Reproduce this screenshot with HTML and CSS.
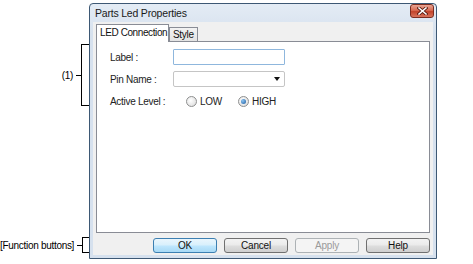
FILE: index.html
```html
<!DOCTYPE html>
<html lang="en">
<head>
  <meta charset="UTF-8" />
  <meta name="viewport" content="width=device-width, initial-scale=1.0"/>
  <title>Parts Led Properties</title>
  <link rel="stylesheet" href="styles.css">
</head>
<body>

  <div class="page">
    <!-- Llamadas de la izquierda -->
    <div class="callouts">
      <div class="callout callout-area">
        <span class="callout-text">(1)</span>
        <span class="tick"></span>
        <span class="bracket"></span>
      </div>
      <div class="callout callout-buttons">
        <span class="callout-text">[Function buttons]</span>
        <span class="tick"></span>
        <span class="bracket"></span>
      </div>
    </div>

    <!-- Ventana de dialogo -->
    <div class="window">
      <div class="titlebar">
        <span class="title">Parts Led Properties</span>
        <button class="close" aria-label="Close">
          <svg width="11" height="8" viewBox="0 0 11 8">
            <path d="M2 1 L9 7 M9 1 L2 7" stroke="#5a1a10" stroke-width="3.2" stroke-linecap="square"/>
            <path d="M2 1 L9 7 M9 1 L2 7" stroke="#ffffff" stroke-width="1.6" stroke-linecap="square"/>
          </svg>
        </button>
      </div>

      <div class="client">
        <div class="tabs">
          <ul class="tab-list" role="tablist">
            <li class="tab" role="tab" aria-selected="true">LED Connection</li>
            <li class="tab" role="tab" aria-selected="false">Style</li>
          </ul>

          <div class="tab-panel" role="tabpanel">
            <div class="form">
              <label class="field-label" for="led-label">Label :</label>
              <input class="text-input" id="led-label" type="text">

              <span class="field-label">Pin Name :</span>
              <div class="select"><span class="select-arrow"></span></div>

              <span class="field-label">Active Level :</span>
              <div class="radios">
                <span class="radio-item radio-low"><span class="radio"></span>LOW</span>
                <span class="radio-item"><span class="radio is-checked"></span>HIGH</span>
              </div>
            </div>
          </div>
        </div>

        <div class="buttons">
          <button class="btn btn-default">OK</button>
          <button class="btn">Cancel</button>
          <button class="btn" disabled>Apply</button>
          <button class="btn">Help</button>
        </div>
      </div>
    </div>
  </div>

</body>
</html>
```

FILE: styles.css
```css
/* General */
body {
  margin: 0;
  background: #fff;
  font-family: "Liberation Sans", Arial, sans-serif;
  font-size: 10px;
  letter-spacing: -0.3px;
  color: #1c1c1c;
}

.page {
  display: flex;
  align-items: flex-start;
}

/* Llamadas */
.callouts {
  width: 89px;
  display: flex;
  flex-direction: column;
  padding-top: 44px;
}

.callout {
  display: flex;
  align-items: center;
  justify-content: flex-end;
  color: #000;
}
.callout-area {
  height: 62px;
}
.callout-buttons {
  height: 16px;
  margin-top: 131px;
}

.callout-text {
  margin-right: 3px;
  white-space: nowrap;
}
.tick {
  width: 5px;
  height: 1px;
  background: #000;
}
.bracket {
  width: 8px;
  height: 100%;
  box-sizing: border-box;
  border: 1px solid #000;
  border-right: none;
}

/* Ventana */
.window {
  width: 348px;
  height: 256px;
  margin-top: 3px;
  box-sizing: border-box;
  border: 1px solid #3d5874;
  border-radius: 4px 4px 0 0;
  background: linear-gradient(#e4ecf5, #d6e1ee 30px);
  padding: 0 3px 3px;
  display: flex;
  flex-direction: column;
}

.titlebar {
  height: 18px;
  display: flex;
  align-items: flex-start;
  justify-content: space-between;
}
.title {
  margin: 3px 0 0 2px;
  font-size: 10.5px;
  letter-spacing: -0.2px;
  color: #1a1a1a;
}
.close {
  width: 24px;
  height: 14px;
  margin-right: -1px;
  padding: 0;
  border: 1px solid #7a2c20;
  border-radius: 3px;
  background: linear-gradient(#eaa593, #d86a52 45%, #c2432a 55%, #d8735c);
  display: flex;
  align-items: center;
  justify-content: center;
}

.client {
  flex: 1;
  background: #f0f0f0;
  padding: 2px 3px 2px;
  display: flex;
  flex-direction: column;
}

/* Pestanas */
.tabs {
  flex: 1;
  display: flex;
  flex-direction: column;
}

.tab-list {
  display: flex;
  align-items: flex-end;
  height: 17px;
  margin: 0;
  padding: 0;
  list-style: none;
}

.tab {
  box-sizing: border-box;
  height: 14px;
  padding: 0 3px;
  border: 1px solid #898c95;
  border-bottom: none;
  background: linear-gradient(#f2f2f2, #e3e3e3);
  line-height: 14px;
  color: #111;
  white-space: nowrap;
}
.tab[aria-selected="true"] {
  position: relative;
  z-index: 1;
  width: 73px;
  height: 18px;
  margin-bottom: -1px;
  padding: 0 3px;
  background: #fff;
  line-height: 15px;
  letter-spacing: -0.4px;
}

.tab-panel {
  flex: 1;
  background: #fff;
  border: 1px solid #898c95;
  padding: 7px 0 0 13px;
}

/* Formulario */
.form {
  display: grid;
  grid-template-columns: 63px 112px;
  grid-auto-rows: 16px;
  row-gap: 6px;
  align-items: center;
}

.field-label {
  color: #222;
  white-space: nowrap;
}

.text-input {
  box-sizing: border-box;
  width: 112px;
  height: 16px;
  margin: 0;
  border: 1px solid #8fb7dd;
  border-radius: 1px;
  background: #fff;
}

.select {
  box-sizing: border-box;
  height: 16px;
  border: 1px solid #c5c5c5;
  border-radius: 2px;
  background: #fff;
  display: flex;
  align-items: center;
  justify-content: flex-end;
  padding-right: 4px;
}
.select-arrow {
  width: 0;
  height: 0;
  border-left: 3px solid transparent;
  border-right: 3px solid transparent;
  border-top: 4px solid #111;
}

.radios {
  display: flex;
  align-items: center;
  padding-left: 13px;
}
.radio-item {
  display: flex;
  align-items: center;
  gap: 3px;
  color: #222;
}
.radio-low {
  width: 52px;
}

.radio {
  box-sizing: border-box;
  width: 11px;
  height: 11px;
  border: 1px solid #8e8f8f;
  border-radius: 50%;
  background: radial-gradient(circle at 40% 40%, #ffffff, #d8d8d8);
  display: flex;
  align-items: center;
  justify-content: center;
}
.radio.is-checked::after {
  content: "";
  width: 5px;
  height: 5px;
  border-radius: 50%;
  background: radial-gradient(circle at 35% 35%, #8cc4f2, #1a5aa0);
}

/* Botones */
.buttons {
  display: flex;
  justify-content: flex-end;
  gap: 7px;
  margin-top: 5px;
}

.btn {
  box-sizing: border-box;
  width: 64px;
  height: 15px;
  padding: 0;
  border: 1px solid #707070;
  border-radius: 3px;
  background: linear-gradient(#f3f3f3, #ebebeb 45%, #dddddd 55%, #cfcfcf);
  font-family: inherit;
  font-size: 10px;
  letter-spacing: -0.2px;
  line-height: 13px;
  color: #111;
}
.btn-default {
  border-color: #3c7fb1;
  background: linear-gradient(#eaf6fd, #d9f0fc 45%, #bee6fd 55%, #a7d9f5);
}
.btn:disabled {
  border-color: #adb2b5;
  background: #f4f4f4;
  color: #9a9a9a;
}
```
